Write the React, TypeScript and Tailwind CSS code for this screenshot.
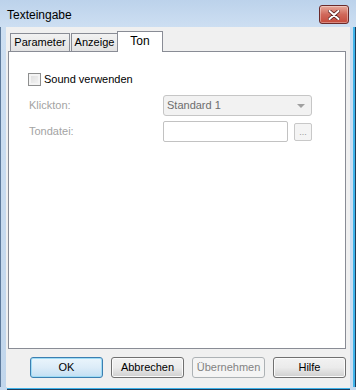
const font = { fontFamily: '"Liberation Sans", Arial, sans-serif' };

function CloseButton() {
  return (
    <div className="flex h-[19px] w-[30px] items-center justify-center rounded-[3px] border border-[#6b2a2a] bg-gradient-to-b from-[#e6a99c] via-[#d0685a] to-[#c44a3c] shadow-[inset_0_0_0_1px_rgba(255,255,255,0.35)]">
      <svg width="12" height="10" viewBox="0 0 12 10">
        <path
          d="M1.5 1 L10.5 9 M10.5 1 L1.5 9"
          stroke="#5a2020"
          strokeWidth="3.6"
          strokeLinecap="round"
        />
        <path
          d="M1.5 1 L10.5 9 M10.5 1 L1.5 9"
          stroke="#ffffff"
          strokeWidth="2"
          strokeLinecap="round"
        />
      </svg>
    </div>
  );
}

function Tab({ label, active, className }: { label: string; active?: boolean; className: string }) {
  if (active) {
    return (
      <div
        className={`relative z-10 -mb-px flex h-[21px] items-start justify-center border border-b-0 border-[#898c95] bg-white pt-[3px] text-[12px] leading-none text-black ${className}`}
      >
        {label}
      </div>
    );
  }
  return (
    <div
      className={`flex h-[18px] items-center justify-center border border-b-0 border-[#898c95] bg-gradient-to-b from-[#f2f2f2] to-[#e2e2e2] text-[11px] text-black ${className}`}
    >
      {label}
    </div>
  );
}

function DialogButton({
  label,
  primary,
  disabled,
}: {
  label: string;
  primary?: boolean;
  disabled?: boolean;
}) {
  let cls =
    "border-[#707070] bg-gradient-to-b from-[#f2f2f2] via-[#ebebeb] to-[#cfcfcf] text-black shadow-[inset_0_0_0_1px_#fbfbfb]";
  if (primary)
    cls =
      "border-[#3c7fb1] bg-gradient-to-b from-[#eaf5fc] via-[#dcecf8] to-[#c2dff3] text-black shadow-[inset_0_0_0_1px_#9fdcf5]";
  if (disabled) cls = "border-[#adb2b5] bg-[#f4f4f4] text-[#838383]";
  return (
    <div
      className={`flex h-[21px] w-[73px] items-center justify-center rounded-[3px] border text-[11px] ${cls}`}
    >
      {label}
    </div>
  );
}

export default function App() {
  return (
    <div className="flex h-[390px] w-[356px] flex-col bg-[#c5d9ee] select-none" style={font}>
      {/* title bar */}
      <div className="flex h-[27px] items-start justify-between bg-gradient-to-b from-[#bcd2eb] to-[#cddff2] pl-[7px] pr-[7px]">
        <span className="pt-[6px] text-[12px] text-black">Texteingabe</span>
        <div className="pt-[5px]">
          <CloseButton />
        </div>
      </div>

      <div className="flex flex-1">
        <div className="w-[7px] border-l border-[#5d7a9c] bg-gradient-to-b from-[#cddff2] to-[#c1d6ec]" />

        {/* client */}
        <div className="flex flex-1 flex-col bg-[#f0f0f0] pl-[2px] pr-[4px] pt-[4px]">
          <div className="flex h-[20px] items-end pl-[2px]">
            <Tab label="Parameter" className="w-[60px]" />
            <Tab label="Anzeige" className="ml-[1px] w-[47px]" />
            <Tab label="Ton" active className="-ml-px w-[46px]" />
          </div>

          <div className="h-[298px] border border-[#898c95] bg-white pl-[19px] pt-[21px] text-[11px]">
            <div className="flex h-[13px] items-center gap-[3px] leading-none">
              <div className="h-[13px] w-[13px] border border-[#8e8f8f] bg-gradient-to-br from-[#dcdcdc] to-[#f6f6f6] shadow-[inset_0_0_0_2px_#f4f4f4]" />
              <span className="text-[11px] text-black">Sound verwenden</span>
            </div>

            <div className="mt-[9px] grid grid-cols-[134px_149px] items-center gap-y-[5px] pl-[1px] leading-none">
              <span className="text-[11px] text-[#a3a3a3]">Klickton:</span>
              <div className="flex h-[21px] items-center justify-between rounded-[3px] border border-[#c6c6c6] bg-[#f2f2f2] pl-[3px] pr-[6px]">
                <span className="text-[11px] text-[#6d6d6d]">Standard 1</span>
                <svg width="8" height="4" viewBox="0 0 8 4">
                  <path d="M0 0 H8 L4 4 Z" fill="#a0a0a0" />
                </svg>
              </div>

              <span className="text-[11px] text-[#a3a3a3]">Tondatei:</span>
              <div className="flex items-center gap-[6px]">
                <div className="h-[21px] w-[125px] rounded-[2px] border border-[#c2c2c2] bg-white" />
                <div className="flex h-[18px] w-[18px] items-end justify-center rounded-[2px] border border-[#c8c8c8] bg-[#f4f4f4] pb-[3px] text-[9px] leading-none text-[#9a9a9a]">
                  ...
                </div>
              </div>
            </div>
          </div>

          <div className="flex gap-[8px] pl-[22px] pt-[8px]">
            <DialogButton label="OK" primary />
            <DialogButton label="Abbrechen" />
            <DialogButton label="Übernehmen" disabled />
            <DialogButton label="Hilfe" />
          </div>
        </div>

        <div className="flex w-[6px]">
          <div className="w-[3px] bg-[#c9dcf0]" />
          <div className="w-[2px] bg-[#3fb3ea]" />
          <div className="w-px bg-[#1f3b5a]" />
        </div>
      </div>

      <div className="ml-[7px] mr-[6px] h-[3px] bg-[#f0f0f0]">
        <div className="mt-[1px] h-[1px] bg-[#3fb3ea]" />
        <div className="h-[1px] bg-[#1f3b5a]" />
      </div>
    </div>
  );
}
